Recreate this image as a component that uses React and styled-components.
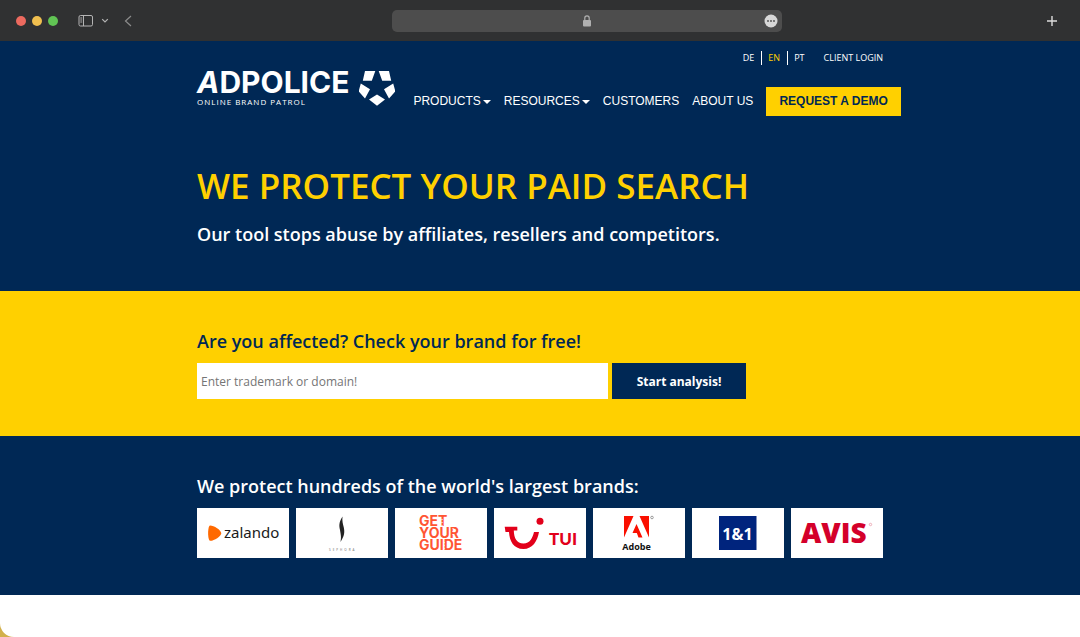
import styled, { createGlobalStyle } from 'styled-components';

const NAVY = '#002855';
const YELLOW = '#ffd000';

const GlobalStyle = createGlobalStyle`
  * {
    box-sizing: border-box;
  }

  body {
    margin: 0;
    background-color: #d2b04c;
    font-family: 'Open Sans', sans-serif;
  }

  a {
    color: inherit;
    text-decoration: none;
  }

  button, input {
    border: 0;
    border-radius: 0;
    font-family: inherit;
  }

  svg {
    display: block;
  }
`;

const Browser = styled.div`
  display: flex;
  flex-direction: column;
  min-height: 100vh;
  overflow: hidden;
  border-bottom-left-radius: 14px;
  background-color: white;
`;

const Toolbar = styled.div`
  display: grid;
  grid-template-columns: 15fr 390px 11fr;
  align-items: center;
  height: 41px;
  padding: 0 22px 0 16px;
  background-color: #303132;
  color: #b4b4b4;
`;

const ToolbarLeft = styled.div`
  display: flex;
  align-items: center;
`;

const Lights = styled.div`
  display: flex;
  gap: 6px;
  margin-right: 20px;
`;

const Light = styled.span`
  width: 10px;
  height: 10px;
  border-radius: 50%;
  background-color: ${props => props.$color};
`;

const IconButton = styled.button`
  margin: 0 ${props => props.$gap || 0}px 0 0;
  padding: 0;
  background: none;
  color: inherit;
`;

const Address = styled.div`
  display: grid;
  grid-template-columns: 1fr auto 1fr;
  align-items: center;
  height: 22px;
  padding: 0 4px;
  border-radius: 5px;
  background-color: #4d4d4d;

  ${IconButton} {
    grid-column: 3;
    justify-self: end;
  }

  > svg {
    grid-column: 2;
  }
`;

const NewTab = styled(IconButton)`
  justify-self: end;
  color: #dcdcdc;
`;

const Band = styled.section`
  padding: ${props => props.$padding};
  background-color: ${props => (props.$yellow ? YELLOW : NAVY)};
  color: ${props => (props.$yellow ? NAVY : 'white')};
`;

const Container = styled.div`
  max-width: 686px;
  margin: 0 auto;
`;

const Header = styled.header`
  display: flex;
  gap: 18px;
`;

const Brand = styled.a`
  display: flex;
  gap: 10px;
  padding-top: 19px;
`;

const BrandName = styled.span`
  display: block;
  font: 700 30px/24px Inter, sans-serif;

  em {
    font-style: italic;
  }
`;

const BrandClaim = styled.span`
  display: block;
  margin-top: 3px;
  font: 400 8px/10px 'Open Sans', sans-serif;
  letter-spacing: 1px;
  white-space: nowrap;
`;

const HeaderRight = styled.div`
  flex: 1;
  min-width: 0;
`;

const Languages = styled.nav`
  display: flex;
  justify-content: flex-end;
  align-items: center;
  margin-bottom: 22px;
  font-size: 9px;
  line-height: 14px;
`;

const Language = styled.a`
  padding: 0 7px 0 6px;
  border-right: ${props => (props.$last ? 0 : '1px solid white')};
  color: ${props => (props.$active ? YELLOW : 'white')};
`;

const Login = styled.a`
  margin-left: 12px;
`;

const Menu = styled.nav`
  display: flex;
  align-items: center;
  gap: 13px;
  font: 400 12px/29px 'Liberation Sans', Arial, sans-serif;
  white-space: nowrap;
`;

const MenuLink = styled.a`
  display: flex;
  align-items: center;
  gap: 2px;
`;

const Caret = styled.span`
  border: 4px solid transparent;
  border-top-color: white;
  border-bottom: 0;
`;

const Demo = styled.a`
  padding: 0 13px;
  background-color: ${YELLOW};
  color: ${NAVY};
  font-weight: 700;
`;

const Title = styled.h1`
  margin: 46px 0 0;
  color: ${YELLOW};
  font-size: 35px;
  font-weight: 600;
  line-height: 48px;
`;

const Lead = styled.p`
  margin: 12px 0 0;
  font-size: 18px;
  font-weight: 600;
  line-height: 24px;
`;

const Label = styled.label`
  display: block;
  margin-bottom: 10px;
  font-size: 18px;
  font-weight: 600;
  line-height: 24px;
`;

const Row = styled.div`
  display: flex;
  gap: 4px;
`;

const TextInput = styled.input`
  flex: 0 1 411px;
  min-width: 0;
  height: 36px;
  padding: 0 4px;
  background-color: white;
  font-size: 12px;

  &::placeholder {
    color: #757575;
  }
`;

const Submit = styled.button`
  width: 134px;
  background-color: ${NAVY};
  color: white;
  font-size: 12px;
  font-weight: 700;
`;

const BrandsTitle = styled.h2`
  margin: 0 0 10px;
  font-size: 18px;
  font-weight: 600;
  line-height: 24px;
`;

const Brands = styled.div`
  display: grid;
  grid-template-columns: repeat(7, 1fr);
  gap: 7px;
`;

const BrandCard = styled.div`
  display: flex;
  justify-content: center;
  align-items: center;
  height: 50px;
  background-color: white;
`;

const Star = () => (
  <svg width="36" height="36" viewBox="0 0 36 36" fill="white" aria-hidden="true">
    <path d="M6 1H16.3L12.8 10.8H3.8ZM19.7 1H30L32.2 10.8H23.2ZM1.8 13.6L11 19.2L6 28.4L-0.4 21.3ZM34.2 13.6L25 19.2L30 28.4L36.4 21.3ZM18 24.4L26 29.6L18 35.8L10 29.6Z" />
  </svg>
);

const SidebarIcon = () => (
  <svg width="16" height="12" viewBox="0 0 16 12" fill="none" stroke="currentColor">
    <rect x="1" y="0.5" width="13.5" height="10.5" rx="1.5" />
    <path d="M5.5 1V11M2.3 3H4.2M2.3 5H4.2M2.3 7H4.2" />
  </svg>
);

const ChevronDown = () => (
  <svg width="8" height="6" viewBox="0 0 8 6" fill="none" stroke="currentColor" strokeWidth="1.2">
    <path d="M1.2 1.2L4 4L6.8 1.2" />
  </svg>
);

const BackIcon = () => (
  <svg width="8" height="12" viewBox="0 0 8 12" fill="none" stroke="#8c8c8c" strokeWidth="1.2">
    <path d="M7 1L1.5 6L7 11" />
  </svg>
);

const Lock = () => (
  <svg width="8" height="12" viewBox="0 0 8 12" fill="none">
    <rect y="5" width="8" height="6.5" rx="1" fill="#b0b0b0" />
    <path d="M1.8 5V3A2.2 2.2 0 0 1 6.2 3V5" stroke="#b0b0b0" strokeWidth="1.2" />
  </svg>
);

const More = () => (
  <svg width="14" height="14" viewBox="0 0 14 14">
    <circle cx="7" cy="7" r="6.5" fill="#d8d8d8" />
    <g fill="#4d4d4d">
      <circle cx="4" cy="7" r="0.9" />
      <circle cx="7" cy="7" r="0.9" />
      <circle cx="10" cy="7" r="0.9" />
    </g>
  </svg>
);

const Plus = () => (
  <svg width="12" height="12" viewBox="0 0 12 12" stroke="currentColor" strokeWidth="1.4">
    <path d="M6 1V11M1 6H11" />
  </svg>
);

const Zalando = () => (
  <svg width="92" height="50" viewBox="0 0 92 50" role="img" aria-label="Zalando">
    <path d="M13 17.5C17 17.5 24 22 24.3 25.2C24 28.5 17 33 13 32.8C10.5 32.5 10.5 18 13 17.5Z" fill="#ff6900" />
    <text x="27" y="30" fill="#1a1a1a" fontFamily="Noto Sans, sans-serif" fontSize="15">zalando</text>
  </svg>
);

const Sephora = () => (
  <svg width="92" height="50" viewBox="0 0 92 50" role="img" aria-label="Sephora">
    <path d="M46.5 8.5C42.5 15 43.2 18 44 22C44.8 27 45.5 29 44.5 34C48.5 28 48.8 24 47.8 19.5C46.8 15.5 46 13 46.5 8.5Z" fill="#222" />
    <text x="33" y="43" fill="#666" fontFamily="Open Sans, sans-serif" fontSize="3" letterSpacing="2">SEPHORA</text>
  </svg>
);

const GetYourGuide = () => (
  <svg width="92" height="50" viewBox="0 0 92 50" role="img" aria-label="GetYourGuide">
    <g fill="#ff5533" fontFamily="Inter, sans-serif" fontSize="14" fontWeight="700">
      <text x="24" y="18">GET</text>
      <text x="24" y="30">YOUR</text>
      <text x="24" y="42">GUIDE</text>
    </g>
    <path d="M47 11V18M58 27V20M49 34V41" stroke="white" strokeWidth="1" strokeDasharray="1 2" />
  </svg>
);

const Tui = () => (
  <svg width="92" height="50" viewBox="0 0 92 50" role="img" aria-label="TUI">
    <path d="M10.7 18.7H23.3V22.5H19.8C20 30 22.5 35.5 29.5 35.5C36 35.5 38.5 30 40 24H45C43.5 33 38.5 41 29.5 41C19.5 41 15.5 33 15 24H11.5Z" fill="#e2001a" />
    <circle cx="46" cy="13.3" r="3.5" fill="#e2001a" />
    <text x="55" y="37" fill="#e2001a" fontFamily="Lato, sans-serif" fontSize="17" fontWeight="900">TUI</text>
  </svg>
);

const Adobe = () => (
  <svg width="92" height="50" viewBox="0 0 92 50" role="img" aria-label="Adobe">
    <path d="M31 8H40.5L31 29.5ZM46.5 8H56V29.5ZM43.5 16L49.5 29.5H45.5L43.8 25H39.5Z" fill="#fa0f00" />
    <circle cx="59" cy="9.5" r="1.3" fill="none" stroke="#777" strokeWidth="0.7" />
    <text x="43.5" y="42" fill="#111" textAnchor="middle" fontFamily="Open Sans, sans-serif" fontSize="9" fontWeight="700">Adobe</text>
  </svg>
);

const OneAndOne = () => (
  <svg width="92" height="50" viewBox="0 0 92 50" role="img" aria-label="1&1">
    <rect x="27" y="8" width="37.5" height="34" fill="#00247d" />
    <text x="45.5" y="32" fill="white" textAnchor="middle" fontFamily="Open Sans, sans-serif" fontSize="16" fontWeight="700">1&amp;1</text>
  </svg>
);

const Avis = () => (
  <svg width="92" height="50" viewBox="0 0 92 50" role="img" aria-label="Avis">
    <text x="10" y="35" fill="#d4002a" fontFamily="Open Sans, sans-serif" fontSize="28" fontWeight="800">AVIS</text>
    <circle cx="79.5" cy="16.5" r="1.2" fill="none" stroke="#e08090" strokeWidth="0.6" />
  </svg>
);

const logos = [Zalando, Sephora, GetYourGuide, Tui, Adobe, OneAndOne, Avis];

const App = () => (
  <>
    <GlobalStyle />
    <Browser>
      <Toolbar>
        <ToolbarLeft>
          <Lights>
            <Light $color="#ec6a5f" />
            <Light $color="#f0bf4f" />
            <Light $color="#61c454" />
          </Lights>
          <IconButton $gap={7} aria-label="Sidebar"><SidebarIcon /></IconButton>
          <IconButton $gap={15} aria-label="Tab groups"><ChevronDown /></IconButton>
          <IconButton aria-label="Back"><BackIcon /></IconButton>
        </ToolbarLeft>
        <Address>
          <Lock />
          <IconButton aria-label="Page menu"><More /></IconButton>
        </Address>
        <NewTab aria-label="New tab"><Plus /></NewTab>
      </Toolbar>

      <Band $padding="10px 0 45px">
        <Container>
          <Header>
            <Brand href="#">
              <span>
                <BrandName><em>A</em>DPOLICE</BrandName>
                <BrandClaim>ONLINE BRAND PATROL</BrandClaim>
              </span>
              <Star />
            </Brand>
            <HeaderRight>
              <Languages>
                <Language href="#de">DE</Language>
                <Language href="#en" $active>EN</Language>
                <Language href="#pt" $last>PT</Language>
                <Login href="#login">CLIENT LOGIN</Login>
              </Languages>
              <Menu>
                <MenuLink href="#products">PRODUCTS<Caret /></MenuLink>
                <MenuLink href="#resources">RESOURCES<Caret /></MenuLink>
                <MenuLink href="#customers">CUSTOMERS</MenuLink>
                <MenuLink href="#about">ABOUT US</MenuLink>
                <Demo href="#demo">REQUEST A DEMO</Demo>
              </Menu>
            </HeaderRight>
          </Header>
          <Title>WE PROTECT YOUR PAID SEARCH</Title>
          <Lead>Our tool stops abuse by affiliates, resellers and competitors.</Lead>
        </Container>
      </Band>

      <Band $yellow $padding="38px 0 37px">
        <Container as="form">
          <Label htmlFor="trademark">Are you affected? Check your brand for free!</Label>
          <Row>
            <TextInput id="trademark" type="text" placeholder="Enter trademark or domain!" />
            <Submit type="button">Start analysis!</Submit>
          </Row>
        </Container>
      </Band>

      <Band $padding="38px 0 37px">
        <Container>
          <BrandsTitle>We protect hundreds of the world's largest brands:</BrandsTitle>
          <Brands>
            {logos.map((Logo, index) => (
              <BrandCard key={index}><Logo /></BrandCard>
            ))}
          </Brands>
        </Container>
      </Band>
    </Browser>
  </>
);

export default App;
